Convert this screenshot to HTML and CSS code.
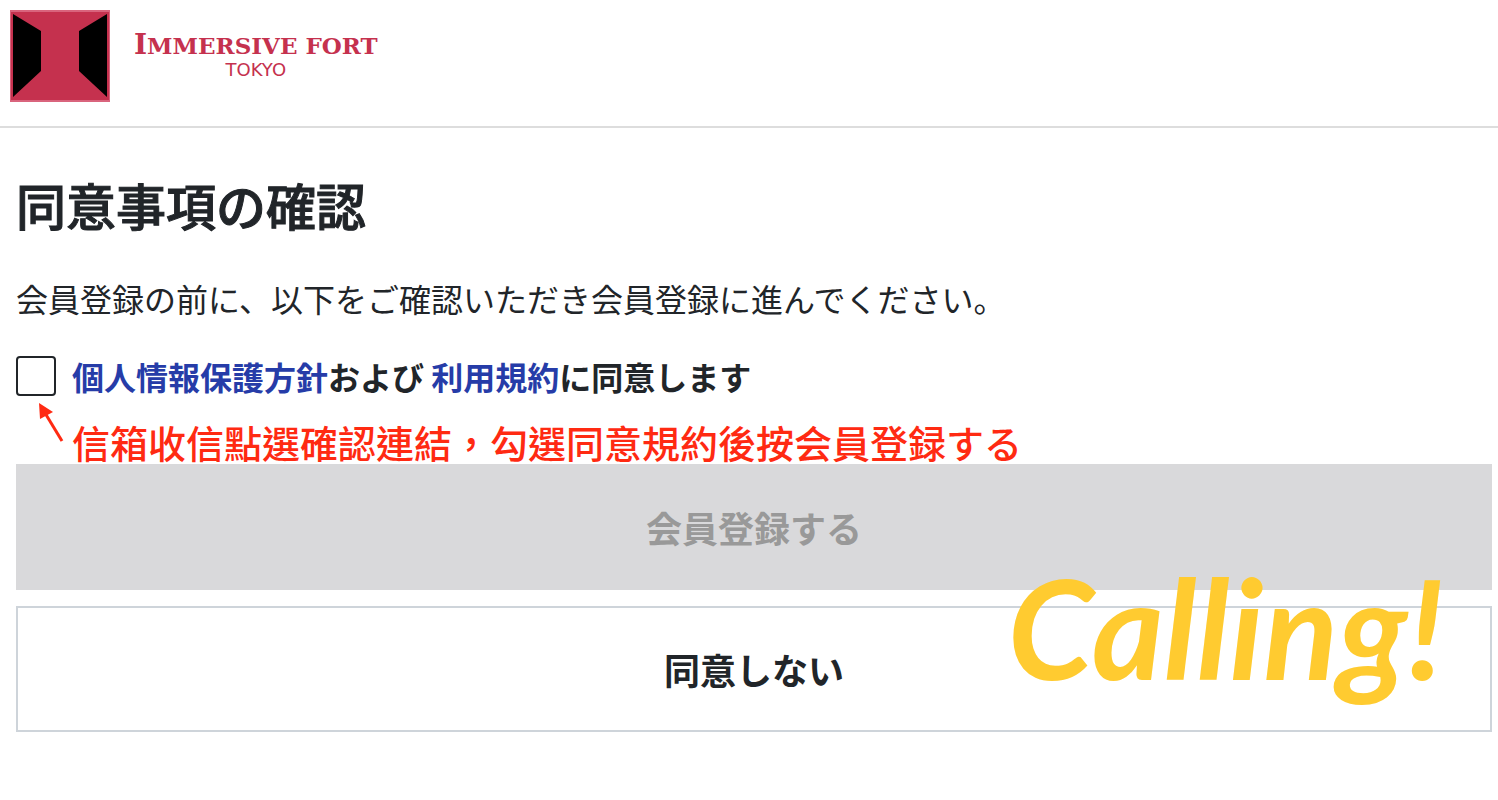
FILE: index.html
```html
<!DOCTYPE html>
<html lang="ja">
<head>
  <meta charset="UTF-8">
  <meta name="viewport" content="width=device-width, initial-scale=1.0">
  <title>同意事項の確認</title>
  <link rel="stylesheet" href="styles.css">
</head>
<body>
  <header class="site-header">
    <svg class="logo-mark" xmlns="http://www.w3.org/2000/svg" width="100" height="92" viewBox="0 0 100 92" aria-hidden="true">
      <path fill="#d9647d" d="M0 0h100v92H0z"/>
      <path fill="#c5314e" d="M1 2h98v88H1z"/>
      <path fill="#000" d="M3 4l28 17v40L3 87zM97 4L69 21v40l28 26z"/>
    </svg>
    <div class="logo-text">
      <span class="logo-name"><span class="logo-initial">I</span>MMERSIVE FORT</span>
      <span class="logo-city">TOKYO</span>
    </div>
  </header>

  <main class="content">
    <h1>同意事項の確認</h1>
    <p class="lead">会員登録の前に、以下をご確認いただき会員登録に進んでください。</p>
    <form>
      <div class="agree">
        <input type="checkbox" id="agree">
        <label for="agree"><a href="#">個人情報保護方針</a>および <a href="#">利用規約</a>に同意します</label>
      </div>
      <div class="note">
        <svg xmlns="http://www.w3.org/2000/svg" width="56" height="68" viewBox="0 0 56 68" aria-hidden="true">
          <path stroke="#ff2a12" stroke-width="3" d="M46 45L29 17"/>
          <path fill="#ff2a12" d="M23 7l14 9-13 7z"/>
        </svg>
        <span lang="zh-Hant">信箱收信點選確認連結，勾選同意規約後按会員登録する</span>
      </div>
      <div class="buttons">
        <button type="submit" class="btn btn-submit" disabled>会員登録する</button>
        <button type="button" class="btn btn-cancel">同意しない</button>
        <span class="watermark">Calling!</span>
      </div>
    </form>
  </main>
</body>
</html>
```
FILE: styles.css
```css
* {
  box-sizing: border-box;
}

body {
  margin: 0;
  background: #fff;
  color: #212529;
  font-family: "Noto Sans CJK JP", sans-serif;
}

.site-header {
  display: flex;
  align-items: flex-start;
  gap: 24px;
  padding: 10px 10px 24px;
  border-bottom: 2px solid #ddd;
}

.logo-mark {
  display: block;
}

.logo-text {
  display: flex;
  flex-direction: column;
  align-items: center;
  padding-top: 20px;
  color: #c5314e;
}

.logo-name {
  font: bold 23px/30px "DejaVu Serif", serif;
}

.logo-initial {
  font-size: 28px;
}

.logo-city {
  font: 18px/18px "DejaVu Sans", sans-serif;
}

.content {
  padding: 44px 6px 64px 16px;
}

h1 {
  margin: 0 0 38px;
  font-size: 50px;
  line-height: 64px;
  font-weight: 500;
  -webkit-text-stroke: 1px #212529;
}

.lead {
  margin: 0 0 34px;
  font-size: 32px;
  line-height: 48px;
}

.agree {
  display: flex;
  align-items: flex-start;
  gap: 16px;
  font-size: 32px;
  line-height: 40px;
  font-weight: bold;
}

.agree input {
  appearance: none;
  flex: none;
  width: 40px;
  height: 40px;
  margin: 0;
  border: 2px solid #212529;
  border-radius: 4px;
  background: #fff;
}

.agree input:checked {
  background: #263ca8;
}

.agree a {
  color: #263ca8;
  text-decoration: none;
}

.note {
  display: flex;
  align-items: flex-end;
  color: #ff2a12;
  font-family: "Noto Sans CJK TC", sans-serif;
  font-size: 38px;
  line-height: 44px;
  font-weight: 500;
}

.note svg {
  flex: none;
}

.buttons {
  position: relative;
  display: flex;
  flex-direction: column;
  gap: 16px;
}

.btn {
  padding: 36px 16px;
  border: 2px solid #ced4da;
  background: #fff;
  color: #212529;
  font-family: inherit;
  font-size: 36px;
  line-height: 50px;
  font-weight: bold;
  cursor: pointer;
}

.btn-submit {
  border-color: #d9d9db;
  background: #d9d9db;
  color: #999;
  cursor: default;
}

/* slogan lying over the buttons */
.watermark {
  position: absolute;
  right: 48px;
  bottom: 36px;
  color: #ffcb30;
  font: italic bold 138px/138px Lato, sans-serif;
  pointer-events: none;
}
```
